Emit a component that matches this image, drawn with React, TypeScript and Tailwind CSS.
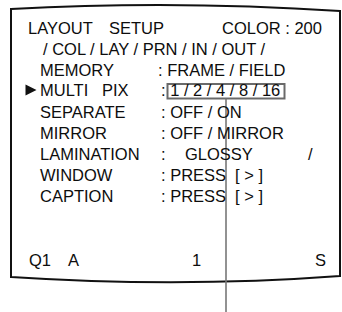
import React from "react";

function Row({ children, className = "" }: { children: React.ReactNode; className?: string }) {
  return <div className={`flex h-[21px] items-baseline whitespace-pre ${className}`}>{children}</div>;
}

export default function App() {
  return (
    <div className="relative w-[342px] h-[312px] overflow-hidden bg-white text-[#0d0d0d] text-[16.5px] leading-[21px] [font-family:'Liberation_Sans',Arial,sans-serif]">
      <svg className="absolute left-0 top-0 pointer-events-none" width="342" height="312" viewBox="0 0 342 312">
        <path d="M11 9 Q 175 0 340 11 L 340 276 Q 180 288 11 277 Z" fill="none" stroke="#111" strokeWidth="2" />
        <rect x="167.5" y="84" width="117" height="14.5" fill="none" stroke="#6a6a6a" strokeWidth="2" />
        <line x1="226" y1="98.5" x2="226" y2="312" stroke="#777" strokeWidth="1.6" />
      </svg>

      <div className="relative flex flex-col pt-[17.5px]">
        <Row className="pl-[28px]">
          <span className="w-[81px]">LAYOUT</span>
          <span className="w-[113px]">SETUP</span>
          <span>COLOR : 200</span>
        </Row>
        <Row className="pl-[43px]">
          <span>/ COL / LAY / PRN / IN / OUT /</span>
        </Row>
        <Row className="pl-[40px]">
          <span className="w-[118px]">MEMORY</span>
          <span>: FRAME / FIELD</span>
        </Row>
        <Row className="-mt-[1px]">
          <span className="w-[40px] flex justify-end pr-[3px] self-center">
            <svg width="12" height="12" viewBox="0 0 12 12">
              <path d="M0.5 0.5 L11.5 6 L0.5 11.5 Z" fill="#111" />
            </svg>
          </span>
          <span className="w-[62px]">MULTI</span>
          <span className="w-[59px]">PIX</span>
          <span>: 1 / 2 / 4 / 8 / 16</span>
        </Row>
        <Row className="pl-[40px] mt-[1px]">
          <span className="w-[121px]">SEPARATE</span>
          <span>: OFF / ON</span>
        </Row>
        <Row className="pl-[40px]">
          <span className="w-[121px]">MIRROR</span>
          <span>: OFF / MIRROR</span>
        </Row>
        <Row className="pl-[40px]">
          <span className="w-[121px]">LAMINATION</span>
          <span className="w-[24px]">:</span>
          <span className="w-[123px]">GLOSSY</span>
          <span>/</span>
        </Row>
        <Row className="pl-[40px]">
          <span className="w-[121px]">WINDOW</span>
          <span className="w-[74px]">: PRESS</span>
          <span>[ &gt; ]</span>
        </Row>
        <Row className="pl-[40px]">
          <span className="w-[121px]">CAPTION</span>
          <span className="w-[74px]">: PRESS</span>
          <span>[ &gt; ]</span>
        </Row>
        <Row className="pl-[29px] mt-[43.5px]">
          <span className="w-[39px]">Q1</span>
          <span className="w-[124px]">A</span>
          <span className="w-[123px]">1</span>
          <span>S</span>
        </Row>
      </div>
    </div>
  );
}
